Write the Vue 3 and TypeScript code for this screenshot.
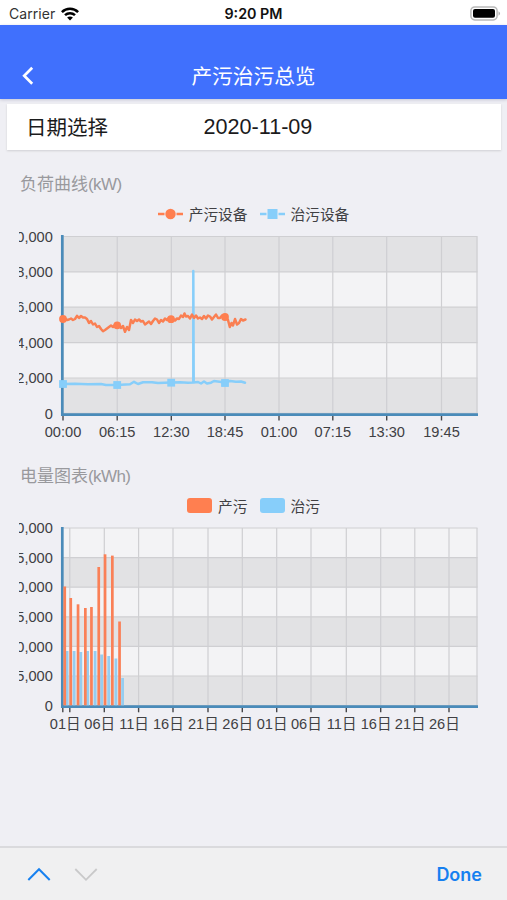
<script setup lang="ts">
interface Tick { x: number; label: string }
interface Bar { x: number; top: number }

const loadLevels = [
  { y: 236.5, label: '10,000' },
  { y: 271.8, label: '8,000' },
  { y: 307.2, label: '6,000' },
  { y: 342.6, label: '4,000' },
  { y: 378, label: '2,000' },
  { y: 413.4, label: '0' },
]
const loadTicks: Tick[] = [
  { x: 63, label: '00:00' }, { x: 117.2, label: '06:15' }, { x: 171.3, label: '12:30' },
  { x: 225, label: '18:45' }, { x: 279, label: '01:00' }, { x: 332.8, label: '07:15' },
  { x: 386.7, label: '13:30' }, { x: 441.5, label: '19:45' },
]
const producePoints = [
  '63,319 65,318.5 67,320 69,319.5 71,318.5 73,320 75,319 77,315.8 79,318 81,316 83,317.5 85,317.5 87,319 89,323 91,321 93,324.5 95,323.5 97,327 99,326 101,329 103,331.3 105,330 107,328.5 109,327 111,325.5 113,327 115,325 117,325.5',
  '119,325.5 121,328 123,326 125,331.8 127,327 129,330 131,320 133,323 135,319.5 137,321 139,319.5 141,321.5 143,321 145,324.5 147,323 149,321.5 151,324 153,321 155,318.5 157,319.5 159,323 161,320 163,321.5 165,318.5 167,320 169,318 171,319.5',
  '173,319 175,320.5 177,318.5 179,319 181,315.5 183,317 184.5,313.5 186,316.5 188,316 190,318.5 192,314.5 194,318 196,315.5 198,318.5 200,317.5 202,319 204,316 206,318.5 208,315.5 210,316.5 212,319.5 214,317 216,314.5 218,318 220,318 222,315.5 225,317',
  '228,320 229.8,327 231.5,323 233,325.5 235,319 237,324.5 239,323 241,319 243,320.5 245.5,319.5',
].join(' ')
const treatPoints = '63,384 75,383.7 88,384.3 101,384 106,385 117,385 130,384.3 134,381.8 138,384 143,382.3 152,382.3 158,383 171,382.5 180,382.2 188,382.7 193.3,382.5 193.3,271 193.7,382.5 198,382 201,383.5 204,381.5 207,383.5 211,382.7 214,381 225,382.5 230,381 236,381.7 241,381.5 245,382.7'
const produceDots = [{ x: 63, y: 319 }, { x: 117.2, y: 325.3 }, { x: 171, y: 319.2 }, { x: 225, y: 317 }]
const treatDots = [{ x: 63, y: 384 }, { x: 117.2, y: 385 }, { x: 171.2, y: 382.7 }, { x: 225, y: 383 }]

const energyLevels = ['30,000', '25,000', '20,000', '15,000', '10,000', '5,000', '0']
  .map((label, i) => ({ y: 528 + i * 29.6, label }))
const energyX = [69.8, 104.3, 138.6, 173, 208, 242.3, 276.7, 311, 346.3, 380.7, 414.8, 449]
const energyTicks: Tick[] = energyX.map((x, i) => ({
  x, label: ['01日', '06日', '11日', '16日', '21日', '26日'][i % 6],
}))
const produceBars: Bar[] = [
  { x: 64.7, top: 586.5 }, { x: 70.7, top: 598 }, { x: 78, top: 604.3 }, { x: 85.3, top: 608 },
  { x: 91.4, top: 607 }, { x: 98.7, top: 567 }, { x: 105, top: 554.3 }, { x: 112.3, top: 555.6 }, { x: 119.5, top: 621.5 },
]
const treatBars: Bar[] = [
  { x: 67, top: 651 }, { x: 74, top: 651 }, { x: 80.7, top: 652 }, { x: 87.5, top: 651 },
  { x: 95, top: 651 }, { x: 101.5, top: 654.5 }, { x: 108.6, top: 656 }, { x: 115.8, top: 658.5 }, { x: 122.5, top: 678 },
]
</script>

<template>
  <div class="screen">
    <div class="status">
      <div class="carrier">
        <span>Carrier</span>
        <svg width="18" height="14" viewBox="0 0 18 14" fill="none" stroke="#000" stroke-width="2.5">
          <path d="M.9 5.1C5.4.6 12.6.6 17.1 5.1" />
          <path d="M4 8.2C6.8 5.5 11.2 5.5 14 8.2" />
          <path d="M9 13.4 6.1 10.5C7.7 9 10.3 9 11.9 10.5Z" fill="#000" stroke="none" />
        </svg>
      </div>
      <b class="time">9:20 PM</b>
      <svg class="battery" width="31" height="15" viewBox="0 0 31 15">
        <rect x=".9" y=".9" width="26.2" height="13" rx="3.8" fill="#fff" stroke="#b9b9b9" stroke-width="1.5" />
        <rect x="3" y="3" width="22" height="8.8" rx="2" />
        <path d="M28.5 5.2q3 2.2 0 4.5Z" fill="#b0b0b0" />
      </svg>
    </div>
    <header class="header">
      <svg class="back" width="12" height="20" viewBox="0 0 12 20"><path d="M10.2 1.8 2.2 9.8l8 8" fill="none" stroke="#fff" stroke-width="2.7" /></svg>
      <h1>产污治污总览</h1>
    </header>
    <div class="picker">
      <span class="picker-label">日期选择</span>
      <span>2020-11-09</span>
    </div>

    <section class="panel">
      <h2>负荷曲线<span class="unit">(kW)</span></h2>
      <div class="legend">
        <span class="entry">
          <svg width="25" height="12" viewBox="0 0 25 12"><path d="M0 6h6.5M18.5 6H25" stroke="#ff7f50" stroke-width="2.3" /><circle cx="12.5" cy="6" r="5.2" fill="#ff7f50" /></svg>
          产污设备
        </span>
        <span class="entry">
          <svg width="25" height="12" viewBox="0 0 25 12"><path d="M0 6h6.5M18.5 6H25" stroke="#87cefa" stroke-width="2.3" /><rect x="7.5" y="1" width="10" height="10" fill="#87cefa" /></svg>
          治污设备
        </span>
      </div>
      <svg class="chart" width="469" height="218" viewBox="19 226 469 218">
        <rect x="63" y="236.5" width="414.5" height="177" fill="#f3f3f5" />
        <rect v-for="i in [0, 2, 4]" :key="i" x="63" :y="loadLevels[i].y" width="414.5" height="35.4" fill="#e2e2e4" />
        <g class="grid">
          <line v-for="l in loadLevels" :key="l.label" x1="63" x2="477.5" :y1="l.y" :y2="l.y" />
          <line v-for="t in loadTicks" :key="t.label" :x1="t.x" :x2="t.x" y1="236.5" y2="413" />
          <line x1="477" x2="477" y1="236.5" y2="413" />
        </g>
        <path class="ticks" v-for="t in loadTicks" :key="t.label" :d="`M${t.x} 415v5.5`" />
        <path class="axis" d="M62.3 235V414.7H478" />
        <polyline class="treat" :points="treatPoints" />
        <polyline class="produce" :points="producePoints" />
        <circle v-for="p in produceDots" :key="p.x" :cx="p.x" :cy="p.y" r="3.9" fill="#ff7f50" />
        <rect v-for="p in treatDots" :key="p.x" :x="p.x - 3.9" :y="p.y - 3.9" width="7.8" height="7.8" fill="#87cefa" />
        <text v-for="l in loadLevels" :key="l.label" x="52.8" :y="l.y + 5.1" text-anchor="end">{{ l.label }}</text>
        <text v-for="t in loadTicks" :key="t.label" :x="t.x" y="437" text-anchor="middle">{{ t.label }}</text>
      </svg>
    </section>

    <section class="panel second">
      <h2>电量图表<span class="unit">(kWh)</span></h2>
      <div class="legend">
        <span class="entry"><i class="swatch orange" />产污</span>
        <span class="entry"><i class="swatch blue" />治污</span>
      </div>
      <svg class="chart" width="469" height="218" viewBox="19 518 469 218">
        <rect x="63" y="528" width="414.5" height="177.6" fill="#f3f3f5" />
        <rect v-for="i in [1, 3, 5]" :key="i" x="63" :y="energyLevels[i].y" width="414.5" height="29.6" fill="#e2e2e4" />
        <g class="grid">
          <line v-for="l in energyLevels" :key="l.label" x1="63" x2="477.5" :y1="l.y" :y2="l.y" />
          <line v-for="t in energyTicks" :key="t.x" :x1="t.x" :x2="t.x" y1="528" y2="705" />
          <line x1="477" x2="477" y1="528" y2="705" />
        </g>
        <path class="ticks" d="M62.8 707v5.3" />
        <path class="ticks" v-for="t in energyTicks" :key="t.x" :d="`M${t.x} 707v5.3`" />
        <path class="axis" d="M62.3 527V706.7H478" />
        <rect v-for="b in treatBars" :key="b.x" :x="b.x - 1.3" :y="b.top" width="2.8" :height="705.3 - b.top" fill="#96cdf0" />
        <rect v-for="b in produceBars" :key="b.x" :x="b.x - 1.3" :y="b.top" width="2.7" :height="705.3 - b.top" fill="#fa8057" />
        <text v-for="l in energyLevels" :key="l.label" x="52.8" :y="l.y + 5.1" text-anchor="end">{{ l.label }}</text>
        <text v-for="t in energyTicks" :key="t.x" :x="t.x - 4.6" y="728.7" text-anchor="middle">{{ t.label }}</text>
      </svg>
    </section>

    <footer class="toolbar">
      <svg width="24" height="15" viewBox="0 0 24 15"><path d="m1.3 13 10.7-10.8L22.7 13" fill="none" stroke="#1680f0" stroke-width="2" /></svg>
      <svg width="24" height="15" viewBox="0 0 24 15"><path d="m1.3 2 10.7 10.8L22.7 2" fill="none" stroke="#c9c9ca" stroke-width="1.8" /></svg>
      <b>Done</b>
    </footer>
  </div>
</template>

<style>
body { margin: 0; }
</style>
<style scoped>
.screen { width: 507px; height: 900px; overflow: hidden; display: flex; flex-direction: column; background: #efeff4; font-family: "Liberation Sans", "Noto Sans CJK SC", sans-serif; color: #1b1b1c; }
.status { height: 25px; box-sizing: border-box; flex: none; display: grid; grid-template-columns: 1fr auto 1fr; align-items: center; padding: 2px 6px 0 9px; background: #fff; font-family: Inter, "Liberation Sans", sans-serif; font-size: 14px; }
.carrier { display: flex; align-items: center; gap: 6px; color: #333; letter-spacing: .05px; }
.time { margin-right: 3px; font-size: 14.3px; font-weight: 600; color: #111; }
.battery { justify-self: end; }
.header { height: 73.5px; flex: none; box-sizing: border-box; padding: 28px 22px 0; display: grid; grid-template-columns: 30px 1fr 30px; align-items: center; background: #4070fd; color: #fff; box-shadow: 0 1px 3px #c5c5d4; }
h1 { margin: 0; padding-top: 2px; text-align: center; font-size: 20.7px; line-height: 30px; font-weight: 400; }
.picker { flex: none; height: 46px; margin: 5.5px 6px 0 7px; display: grid; grid-template-columns: 177.5px 1fr; align-items: center; padding-left: 19px; background: #fff; box-shadow: 0 1px 2px #cfcfd3; font-size: 21.6px; }
.picker-label { padding-bottom: 2px; font-size: 20.5px; }
.panel { flex: none; margin: 18px 19px 0; height: 276px; display: flex; flex-direction: column; }
h2 { flex: none; margin: 0 0 0 1px; height: 33px; font-size: 17px; line-height: 33px; font-weight: 400; color: #99999d; }
.unit { letter-spacing: -.6px; }
.legend { flex: none; height: 25px; display: flex; justify-content: center; align-items: center; gap: 12px; font-size: 14.7px; color: #404043; }
.entry { display: flex; align-items: center; gap: 6px; }
.swatch { width: 25px; height: 15px; border-radius: 3px; }
.orange { background: #ff7f50; }
.blue { background: #87cefa; }
.chart { display: block; flex: none; overflow: hidden; }
.chart text { font-size: 14.6px; fill: #404043; }
.grid line { stroke: #cfcfd2; stroke-width: 1.2; }
.ticks { stroke: #47474a; stroke-width: 1.4; }
.axis { fill: none; stroke: #4a8bb9; stroke-width: 2.7; }
.produce, .treat { fill: none; stroke-width: 2.5; stroke-linejoin: round; stroke-linecap: round; }
.produce { stroke: #fa7f52; }
.treat { stroke: #87cefa; }
.second { margin-top: 16px; }
.toolbar { flex: none; height: 54px; box-sizing: border-box; margin-top: auto; border-top: 2px solid #dadadd; padding: 0 25px 0 27px; display: flex; align-items: center; gap: 23px; background: #f0f0f1; color: #1680f0; font-size: 18px; font-family: Inter, "Liberation Sans", sans-serif; }
.toolbar b { margin-left: auto; font-weight: 600; }
</style>
